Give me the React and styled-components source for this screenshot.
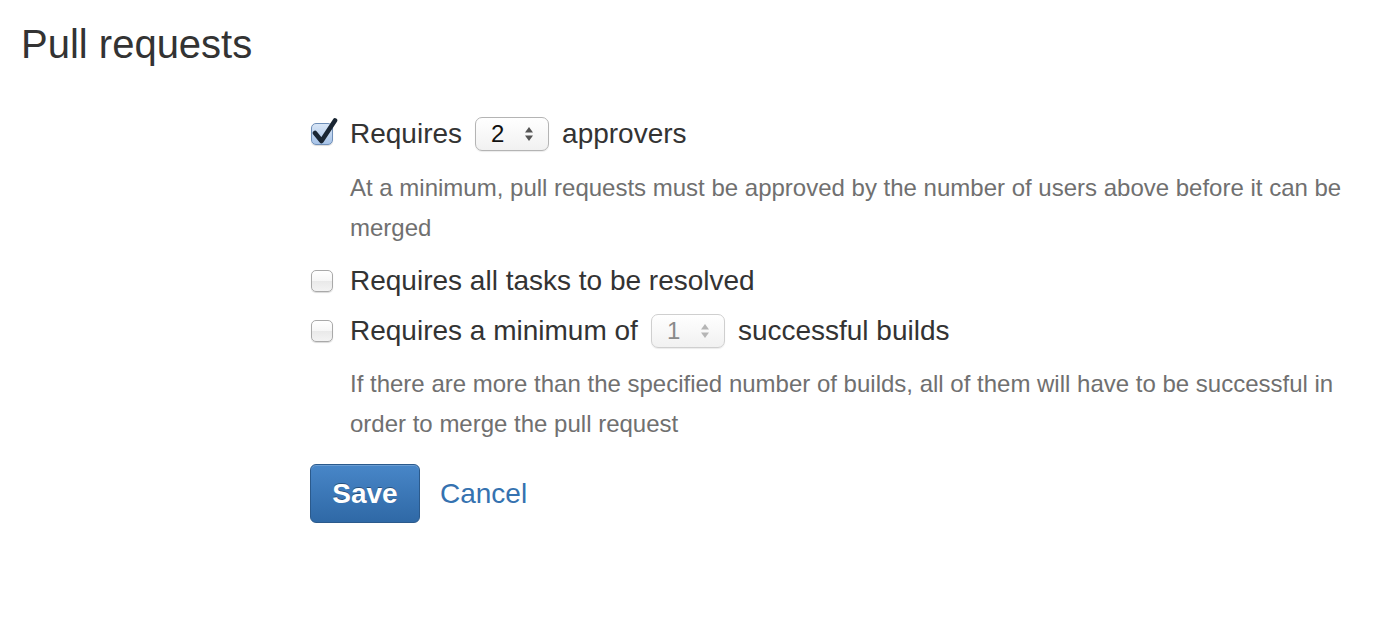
import React from 'react';
import styled, { createGlobalStyle } from 'styled-components';

const GlobalStyle = createGlobalStyle`
  body {
    margin: 0;
    background: #fff;
    font-family: "Liberation Sans", Arial, sans-serif;
    color: #333;
  }
`;

const Page = styled.div`
  padding: 20px 0 0 21px;
  width: 1394px;
  height: 618px;
  box-sizing: border-box;
`;

const Title = styled.h1`
  margin: 0;
  font-size: 40px;
  line-height: 48px;
  font-weight: normal;
  color: #333;
`;

const Form = styled.div`
  margin: 41px 0 0 289px;
  display: flex;
  flex-direction: column;
`;

const Row = styled.div`
  display: flex;
  align-items: center;
  height: 50px;
  font-size: 28px;
  color: #333;
`;

const Label = styled.span``;

const Box = styled.span`
  width: 22px;
  height: 22px;
  margin: 0 17px 0 1px;
  box-sizing: border-box;
  border-radius: 5px;
  border: 1px solid ${props => (props.$checked ? '#6f8fb8' : '#a9a9a9')};
  background: ${props =>
    props.$checked
      ? 'linear-gradient(#d9e6f6, #a7c3e8)'
      : 'linear-gradient(#ffffff 0%, #f6f6f6 50%, #e9e9e9 51%, #f3f3f3 100%)'};
  box-shadow: 0 1px 1px rgba(0, 0, 0, 0.15);
  position: relative;
  flex: none;
`;

const Tick = styled.svg`
  position: absolute;
  left: 0;
  top: -6px;
`;

const Checkbox = ({ checked }) => (
  <Box $checked={checked}>
    {checked && (
      <Tick width="26" height="27" viewBox="0 0 26 27">
        <path
          d="M3 15 L9.5 23 L23 2.5"
          fill="none"
          stroke="#1a2633"
          strokeWidth="4.6"
          strokeLinecap="round"
          strokeLinejoin="round"
        />
      </Tick>
    )}
  </Box>
);

const SelectBox = styled.span`
  display: inline-flex;
  align-items: center;
  justify-content: space-between;
  box-sizing: border-box;
  width: 74px;
  height: 34px;
  margin: 0 13px;
  padding: 0 14px 0 15px;
  border: 1px solid ${props => (props.$disabled ? '#cfcfcf' : '#b4b4b4')};
  border-radius: 7px;
  background: linear-gradient(#ffffff, #f1f1f1);
  box-shadow: 0 1px 1px rgba(0, 0, 0, 0.08);
  font-size: 24px;
  color: ${props => (props.$disabled ? '#8a8a8a' : '#111')};
`;

const Select = ({ value, disabled }) => (
  <SelectBox $disabled={disabled}>
    <span>{value}</span>
    <svg width="10" height="18" viewBox="0 0 10 18">
      <path d="M5 2 L9 7.5 L1 7.5 Z" fill={disabled ? '#b5b5b5' : '#555'} />
      <path d="M5 16 L9 10.5 L1 10.5 Z" fill={disabled ? '#b5b5b5' : '#555'} />
    </svg>
  </SelectBox>
);

const Description = styled.div`
  margin: ${props => props.$top}px 0 ${props => props.$bottom}px 40px;
  width: 1010px;
  font-size: 24px;
  line-height: 40px;
  color: #707070;
`;

const Actions = styled.div`
  display: flex;
  align-items: center;
  margin: 20px 0 0 0;
  gap: 20px;
`;

const SaveButton = styled.button`
  width: 110px;
  height: 59px;
  border: 1px solid #2b5a8c;
  border-radius: 6px;
  background: linear-gradient(#4886c8, #2f69a6);
  box-shadow: inset 0 1px 0 rgba(255, 255, 255, 0.2);
  color: #fff;
  font-family: "Liberation Sans", Arial, sans-serif;
  font-size: 28px;
  font-weight: bold;
  text-shadow: 0 -1px 0 rgba(0, 0, 0, 0.35);
  cursor: pointer;
`;

const CancelLink = styled.a`
  color: #3572b0;
  font-size: 28px;
  text-decoration: none;
`;

const App = () => (
  <Page>
    <GlobalStyle />
    <Title>Pull requests</Title>
    <Form>
      <Row>
        <Checkbox checked />
        <Label>Requires</Label>
        <Select value="2" />
        <Label>approvers</Label>
      </Row>
      <Description $top={9} $bottom={8}>
        At a minimum, pull requests must be approved by the number of users above before it can be
        merged
      </Description>
      <Row>
        <Checkbox />
        <Label>Requires all tasks to be resolved</Label>
      </Row>
      <Row>
        <Checkbox />
        <Label>Requires a minimum of</Label>
        <Select value="1" disabled />
        <Label>successful builds</Label>
      </Row>
      <Description $top={8} $bottom={0}>
        If there are more than the specified number of builds, all of them will have to be successful in
        order to merge the pull request
      </Description>
      <Actions>
        <SaveButton>Save</SaveButton>
        <CancelLink href="#">Cancel</CancelLink>
      </Actions>
    </Form>
  </Page>
);

export default App;
